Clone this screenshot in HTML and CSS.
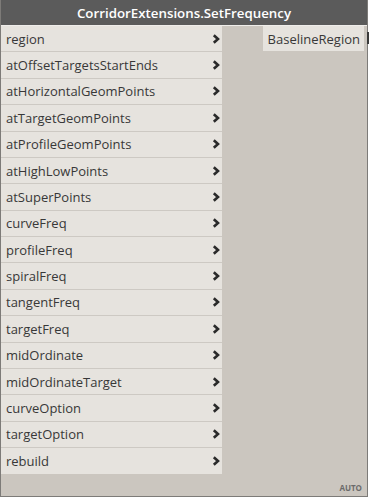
FILE: index.html
```html
<!DOCTYPE html>
<html>
<head>
<meta charset="utf-8">
<link rel="stylesheet" href="styles.css">
</head>
<body>
<div class="node">
  <div class="header">CorridorExtensions.SetFrequency</div>
  <div class="body">
    <div class="inputs">
      <div class="port"><span>region</span><svg class="chev" viewBox="0 0 8 10"><polyline points="1.8,1.2 6,5 1.8,8.8"/></svg></div>
      <div class="port"><span>atOffsetTargetsStartEnds</span><svg class="chev" viewBox="0 0 8 10"><polyline points="1.8,1.2 6,5 1.8,8.8"/></svg></div>
      <div class="port"><span>atHorizontalGeomPoints</span><svg class="chev" viewBox="0 0 8 10"><polyline points="1.8,1.2 6,5 1.8,8.8"/></svg></div>
      <div class="port"><span>atTargetGeomPoints</span><svg class="chev" viewBox="0 0 8 10"><polyline points="1.8,1.2 6,5 1.8,8.8"/></svg></div>
      <div class="port"><span>atProfileGeomPoints</span><svg class="chev" viewBox="0 0 8 10"><polyline points="1.8,1.2 6,5 1.8,8.8"/></svg></div>
      <div class="port"><span>atHighLowPoints</span><svg class="chev" viewBox="0 0 8 10"><polyline points="1.8,1.2 6,5 1.8,8.8"/></svg></div>
      <div class="port"><span>atSuperPoints</span><svg class="chev" viewBox="0 0 8 10"><polyline points="1.8,1.2 6,5 1.8,8.8"/></svg></div>
      <div class="port"><span>curveFreq</span><svg class="chev" viewBox="0 0 8 10"><polyline points="1.8,1.2 6,5 1.8,8.8"/></svg></div>
      <div class="port"><span>profileFreq</span><svg class="chev" viewBox="0 0 8 10"><polyline points="1.8,1.2 6,5 1.8,8.8"/></svg></div>
      <div class="port"><span>spiralFreq</span><svg class="chev" viewBox="0 0 8 10"><polyline points="1.8,1.2 6,5 1.8,8.8"/></svg></div>
      <div class="port"><span>tangentFreq</span><svg class="chev" viewBox="0 0 8 10"><polyline points="1.8,1.2 6,5 1.8,8.8"/></svg></div>
      <div class="port"><span>targetFreq</span><svg class="chev" viewBox="0 0 8 10"><polyline points="1.8,1.2 6,5 1.8,8.8"/></svg></div>
      <div class="port"><span>midOrdinate</span><svg class="chev" viewBox="0 0 8 10"><polyline points="1.8,1.2 6,5 1.8,8.8"/></svg></div>
      <div class="port"><span>midOrdinateTarget</span><svg class="chev" viewBox="0 0 8 10"><polyline points="1.8,1.2 6,5 1.8,8.8"/></svg></div>
      <div class="port"><span>curveOption</span><svg class="chev" viewBox="0 0 8 10"><polyline points="1.8,1.2 6,5 1.8,8.8"/></svg></div>
      <div class="port"><span>targetOption</span><svg class="chev" viewBox="0 0 8 10"><polyline points="1.8,1.2 6,5 1.8,8.8"/></svg></div>
      <div class="port"><span>rebuild</span><svg class="chev" viewBox="0 0 8 10"><polyline points="1.8,1.2 6,5 1.8,8.8"/></svg></div>
    </div>
    <div class="outputs">
      <div class="out">BaselineRegion</div>
    </div>
  </div>
  <div class="footer"><span class="auto">AUTO</span></div>
</div>
</body>
</html>
```

FILE: styles.css
```css
html, body {
  margin: 0;
  padding: 0;
  background: #ffffff;
}
body {
  font-family: "Open Sans", "Noto Sans", sans-serif;
}
.node {
  width: 366px;
  height: 496px;
  border: 1px solid #7d7b78;
  border-top: none;
  background: #cbc6bf;
  display: flex;
  flex-direction: column;
}
.header {
  height: 26px;
  flex: none;
  background: #5b5b5b;
  color: #ffffff;
  font-size: 13.3px;
  font-weight: 600;
  display: flex;
  align-items: center;
  justify-content: center;
  border-bottom: 1px solid #efedea;
  box-sizing: border-box;
}
.body {
  display: flex;
  flex: none;
}
.inputs {
  width: 221px;
  display: flex;
  flex-direction: column;
}
.port {
  height: 26.375px;
  box-sizing: border-box;
  background: #e6e3de;
  border-bottom: 1px solid #cdc9c3;
  display: flex;
  align-items: center;
  justify-content: space-between;
  padding: 0 2px 0 5px;
  font-size: 13px;
  color: #383838;
}
.port:last-child {
  border-bottom: none;
}
.chev {
  width: 8px;
  height: 10px;
}
.chev polyline {
  fill: none;
  stroke: #2a2a2a;
  stroke-width: 2.6;
}
.outputs {
  flex: 1;
  display: flex;
  flex-direction: column;
  align-items: flex-end;
}
.out {
  position: relative;
  height: 25px;
  box-sizing: border-box;
  background: #e6e3de;
  font-size: 13px;
  color: #383838;
  display: flex;
  align-items: center;
  padding: 0 4px 0 5px;
  margin-right: 3px;
}
.out::after {
  content: "";
  position: absolute;
  right: -5px;
  top: 6px;
  width: 2px;
  height: 12px;
  background: #3a3a3a;
}
.footer {
  flex: 1;
  display: flex;
  align-items: flex-end;
  justify-content: flex-end;
  padding: 0 5px 3px 0;
}
.auto {
  font-size: 8px;
  font-weight: 700;
  color: #6b6b6b;
}
```
